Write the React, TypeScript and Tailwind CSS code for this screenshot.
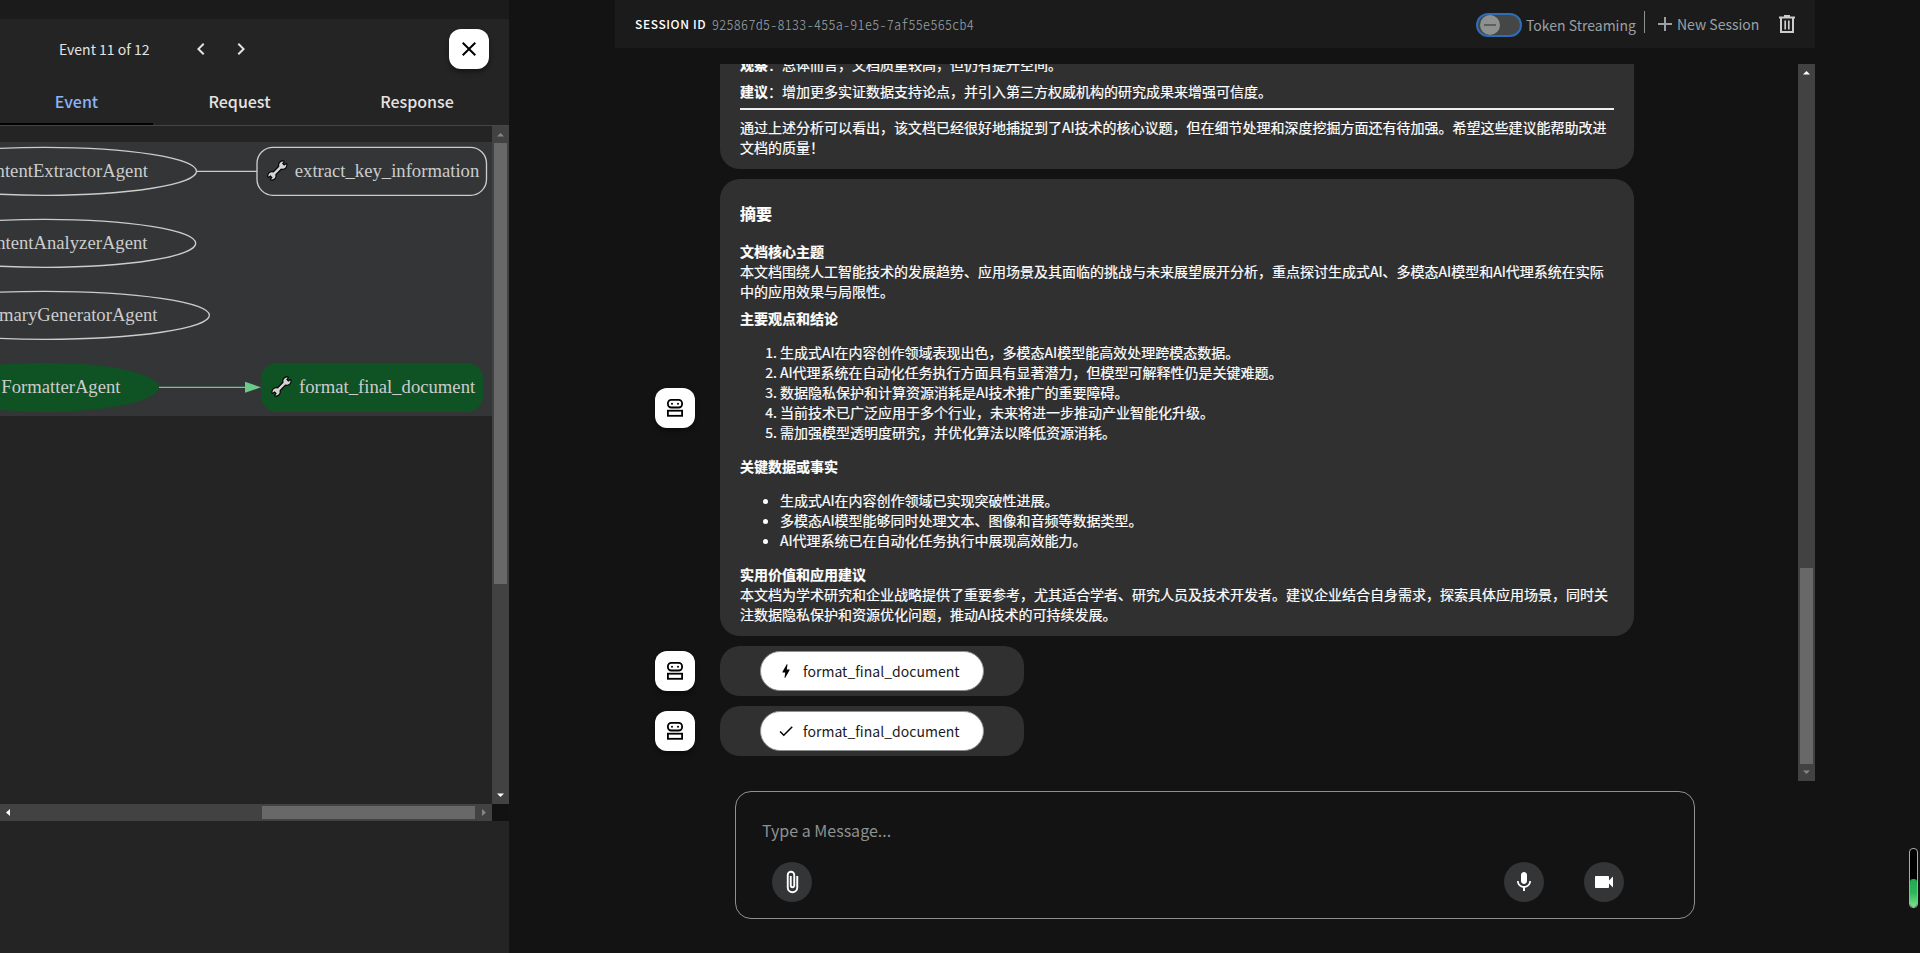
import React from "react";
import {
  MdAdd,
  MdBolt,
  MdCheck,
  MdChevronLeft,
  MdChevronRight,
  MdClose,
  MdMic,
  MdVideocam,
} from "react-icons/md";

function RobotIcon() {
  return (
    <svg width="20" height="20" viewBox="0 0 20 20" fill="none" stroke="#000" strokeWidth="1.8">
      <rect x="2.9" y="1.9" width="14.2" height="7.6" rx="3.4" />
      <rect x="2.9" y="12.7" width="14.2" height="5.1" />
      <circle cx="7" cy="5.700" r="1" fill="#000" stroke="none" />
      <circle cx="13" cy="5.700" r="1" fill="#000" stroke="none" />
    </svg>
  );
}

function Avatar() {
  return (
    <div className="flex size-10 shrink-0 items-center justify-center rounded-[12px] bg-white shadow-[0_3px_5px_rgba(0,0,0,0.4)]">
      <RobotIcon />
    </div>
  );
}

type Dir = "up" | "down" | "left" | "right";
const ARROWS: Record<Dir, string> = {
  up: "M5 10.5L8.5 7L12 10.5z",
  down: "M5 6.5L8.5 10L12 6.5z",
  left: "M10 5L6 8.5L10 12z",
  right: "M7 5L11 8.5L7 12z",
};

function ScrollArrow({ dir, muted }: { dir: Dir; muted?: boolean }) {
  return (
    <svg width="17" height="17" viewBox="0 0 17 17" className="shrink-0">
      <path d={ARROWS[dir]} fill={muted ? "#868686" : "#fff"} />
    </svg>
  );
}

function Wrench({ x, y }: { x: number; y: number }) {
  const jaws =
    "M16.300 1.100A3.600 3.600 0 1 0 18.900 3.700L16.800 5.300L14.700 3.200zM3.700 18.900A3.600 3.600 0 1 0 1.100 16.300L3.200 14.700L5.300 16.800z";
  return (
    <g transform={`translate(${x} ${y})`} strokeLinejoin="round" strokeLinecap="round">
      <path d={jaws} fill="#000" stroke="#000" strokeWidth="2.2" />
      <path d="M5.200 14.800L14.800 5.200" stroke="#000" strokeWidth="4.800" />
      <path d={jaws} fill="#d4d4d4" />
      <path d="M5.200 14.800L14.800 5.200" stroke="#d4d4d4" strokeWidth="2.600" />
    </g>
  );
}

function AgentGraph() {
  return (
    <svg
      width="492"
      height="274"
      viewBox="0 142 492 274"
      className="block bg-[#333537] font-['Liberation_Serif',serif] text-[18.67px]"
    >
      <g fill="none" stroke="#ccc" strokeWidth="1.33">
        <ellipse cx="45" cy="171.300" rx="151.500" ry="24" />
        <ellipse cx="45" cy="243.300" rx="150.700" ry="24" />
        <ellipse cx="45" cy="315.300" rx="164.400" ry="24" />
        <path d="M197 171.300H257" />
        <rect x="257" y="147.300" width="229.500" height="48" rx="16" />
      </g>
      <ellipse cx="45" cy="387.300" rx="114" ry="24.600" fill="#0f5223" />
      <rect x="261" y="362.700" width="222" height="49.300" rx="16" fill="#0f5223" />
      <path d="M159 387.300H246" stroke="#69cb87" strokeWidth="1.33" />
      <path d="M245 381.800L261 387.300L245 392.800z" fill="#69cb87" />
      <g fill="#ccc">
        <text x="147.900" y="176.700" textAnchor="end">ContentExtractorAgent</text>
        <text x="147.500" y="248.700" textAnchor="end">ContentAnalyzerAgent</text>
        <text x="157.500" y="320.700" textAnchor="end">SummaryGeneratorAgent</text>
        <text x="120.500" y="392.700" textAnchor="end">FormatterAgent</text>
        <text x="294.800" y="176.700">extract_key_information</text>
        <text x="299" y="392.700">format_final_document</text>
      </g>
      <Wrench x={267.3} y={160.5} />
      <Wrench x={271.5} y={376.5} />
    </svg>
  );
}

function EventPanel() {
  return (
    <aside className="flex w-[509px] shrink-0 flex-col bg-[#242424]">
      <div className="h-[19px] shrink-0 bg-[#1b1b1b]" />
      <div className="flex h-[60px] shrink-0 items-center pr-5 pl-[59px]">
        <span className="mt-px w-[130px] text-[14px] text-[#e3e3e3]">Event 11 of 12</span>
        <MdChevronLeft className="size-6 text-[#e3e3e3]" />
        <MdChevronRight className="ml-4 size-6 text-[#e3e3e3]" />
        <button className="ml-auto flex size-10 items-center justify-center rounded-[12px] bg-white shadow-[0_3px_5px_rgba(0,0,0,0.4)]">
          <MdClose className="size-6 text-black" />
        </button>
      </div>
      <nav className="flex h-[47px] shrink-0 border-b border-[#444746] text-[16px] font-medium text-[#e3e3e3]">
        <div className="flex w-[153px] items-center justify-center border-b-2 border-black text-[#8ab4f8]">Event</div>
        <div className="flex w-[173px] items-center justify-center pb-0.5">Request</div>
        <div className="flex w-[182px] items-center justify-center pb-0.5">Response</div>
      </nav>
      <div className="flex h-[678px] shrink-0">
        <div className="w-[492px] pt-4">
          <AgentGraph />
        </div>
        <div className="flex w-[17px] flex-col items-center bg-[#424242]">
          <ScrollArrow dir="up" muted />
          <div className="h-[441px] w-[13px] bg-[#686868]" />
          <div className="mt-auto flex">
            <ScrollArrow dir="down" />
          </div>
        </div>
      </div>
      <div className="flex h-[17px] shrink-0">
        <div className="flex w-[492px] items-center bg-[#424242]">
          <ScrollArrow dir="left" />
          <div className="ml-auto h-[13px] w-[213px] bg-[#686868]" />
          <ScrollArrow dir="right" muted />
        </div>
        <div className="w-[17px] bg-[#121212]" />
      </div>
    </aside>
  );
}

function TrashIcon() {
  return (
    <svg width="16" height="19" viewBox="0 0 16 19" fill="none" stroke="#ccc" strokeWidth="2">
      <path d="M0 2.500H16" />
      <path d="M5 1H11" />
      <path d="M2 3V17H14V3" />
      <path d="M6.200 5.500V14.500M9.800 5.500V14.500" strokeWidth="1.700" />
    </svg>
  );
}

function PaperclipIcon() {
  return (
    <svg width="24" height="24" viewBox="0 0 24 24" fill="none" stroke="#fff" strokeWidth="1.9">
      <path d="M17.250 6V17.500A4.750 4.750 0 0 1 7.750 17.500V5A3.250 3.250 0 0 1 14.250 5V15.500A1.750 1.750 0 0 1 10.750 15.500V6" />
    </svg>
  );
}

function SessionBar() {
  return (
    <header className="flex h-12 shrink-0 items-center bg-[#1b1b1b] pr-5 pl-5 text-[#9aa0a6]">
      <span className="w-[77px] text-[12px] font-medium tracking-[0.6px] whitespace-nowrap text-white">SESSION ID</span>
      <span className="text-[14px] font-light tracking-[0.28px] [font-feature-settings:'hwid']">
        925867d5-8133-455a-91e5-7af55e565cb4
      </span>
      <div className="ml-auto flex items-center">
        <div className="mt-0.5 flex h-6 w-[46px] items-center rounded-full border-2 border-[#2f6cba] bg-[#444746] pl-0.5">
          <div className="flex size-5 items-center justify-center rounded-full bg-[#8e918f]">
            <div className="h-0.5 w-3 bg-[#5c5f5e]" />
          </div>
        </div>
        <span className="mt-[3px] ml-1 w-[110px] text-[14px] whitespace-nowrap">Token Streaming</span>
        <div className="mb-1 ml-[8px] h-[22px] w-px bg-[#8e918f]" />
        <MdAdd className="ml-2 size-6" />
        <span className="w-[83px] text-[14px] whitespace-nowrap">New Session</span>
        <div className="ml-[19px]">
          <TrashIcon />
        </div>
      </div>
    </header>
  );
}

function ToolChip({ icon }: { icon: React.ReactNode }) {
  return (
    <div className="mt-[10px] flex items-center pl-10">
      <Avatar />
      <div className="ml-[25px] flex h-[50px] w-[304px] items-center rounded-[20px] bg-[#303030] pl-10">
        <div className="flex h-10 w-[224px] items-center rounded-full border border-[#8e918f] bg-white pl-4 text-[14px] text-[#1b1b1b]">
          <span className="flex w-[26px]">{icon}</span>
          <span className="tracking-[0.03px]">format_final_document</span>
        </div>
      </div>
    </div>
  );
}

function Conversation() {
  return (
    <div className="flex h-full w-[1183px] flex-col justify-end overflow-hidden pb-[25px] text-[14px] leading-5 text-white">
      <div className="ml-[105px] w-[914px] shrink-0 rounded-[20px] bg-[#303030] px-5 pt-5 pb-3 [-webkit-text-stroke:0.2px_#fff]">
        <p>
          <strong>观察</strong>：总体而言，文档质量较高，但仍有提升空间。
        </p>
        <p className="mt-[7px]">
          <strong>建议</strong>：增加更多实证数据支持论点，并引入第三方权威机构的研究成果来增强可信度。
        </p>
        <hr className="mt-[7px] mb-[7px] border-0 border-t-2 border-[#eee]" />
        <p>
          通过上述分析可以看出，该文档已经很好地捕捉到了AI技术的核心议题，但在细节处理和深度挖掘方面还有待加强。希望这些建议能帮助改进文档的质量！
        </p>
      </div>
      <div className="mt-[10px] flex shrink-0 items-center pl-10">
        <Avatar />
        <div className="ml-[25px] h-[457px] w-[914px] rounded-[20px] bg-[#303030] px-5 pt-6 [-webkit-text-stroke:0.2px_#fff]">
          <h2 className="text-[16px] font-bold">摘要</h2>
          <h3 className="mt-[18px] font-bold">文档核心主题</h3>
          <p>
            本文档围绕人工智能技术的发展趋势、应用场景及其面临的挑战与未来展望展开分析，重点探讨生成式AI、多模态AI模型和AI代理系统在实际中的应用效果与局限性。
          </p>
          <h3 className="mt-[7px] font-bold">主要观点和结论</h3>
          <ol className="mt-[14px] list-decimal pl-10">
            <li>生成式AI在内容创作领域表现出色，多模态AI模型能高效处理跨模态数据。</li>
            <li>AI代理系统在自动化任务执行方面具有显著潜力，但模型可解释性仍是关键难题。</li>
            <li>数据隐私保护和计算资源消耗是AI技术推广的重要障碍。</li>
            <li>当前技术已广泛应用于多个行业，未来将进一步推动产业智能化升级。</li>
            <li>需加强模型透明度研究，并优化算法以降低资源消耗。</li>
          </ol>
          <h3 className="mt-[14px] font-bold">关键数据或事实</h3>
          <ul className="mt-[14px] list-disc pl-10">
            <li>生成式AI在内容创作领域已实现突破性进展。</li>
            <li>多模态AI模型能够同时处理文本、图像和音频等数据类型。</li>
            <li>AI代理系统已在自动化任务执行中展现高效能力。</li>
          </ul>
          <h3 className="mt-[14px] font-bold">实用价值和应用建议</h3>
          <p>
            本文档为学术研究和企业战略提供了重要参考，尤其适合学者、研究人员及技术开发者。建议企业结合自身需求，探索具体应用场景，同时关注数据隐私保护和资源优化问题，推动AI技术的可持续发展。
          </p>
        </div>
      </div>
      <ToolChip icon={<MdBolt className="size-[18px] text-black" />} />
      <ToolChip icon={<MdCheck className="size-[18px] text-black" />} />
    </div>
  );
}

function RoundButton({ children }: { children: React.ReactNode }) {
  return (
    <button className="flex size-10 items-center justify-center rounded-full bg-[#333537] text-white">{children}</button>
  );
}

function Composer() {
  return (
    <div className="mt-[10px] ml-[120px] h-[128px] w-[960px] shrink-0 rounded-[16px] border border-[#8e918f] px-[26px] pt-[26px]">
      <div className="h-6 text-[16px] leading-6 text-[#8e918f]">Type a Message...</div>
      <div className="mt-5 flex pl-[10px]">
        <RoundButton>
          <PaperclipIcon />
        </RoundButton>
        <div className="ml-auto flex gap-10 pr-11">
          <RoundButton>
            <MdMic className="size-6" />
          </RoundButton>
          <RoundButton>
            <MdVideocam className="size-6" />
          </RoundButton>
        </div>
      </div>
    </div>
  );
}

export default function App() {
  return (
    <div className="relative flex h-[953px] w-[1920px] overflow-hidden bg-[#131313] font-['Noto_Sans_CJK_SC',sans-serif]">
      <EventPanel />
      <main className="ml-[106px] flex w-[1200px] flex-col">
        <SessionBar />
        <div className="mt-4 flex h-[717px] shrink-0">
          <Conversation />
          <div className="flex w-[17px] flex-col items-center bg-[#424242]">
            <ScrollArrow dir="up" />
            <div className="mt-auto h-[196px] w-[13px] bg-[#686868]" />
            <ScrollArrow dir="down" muted />
          </div>
        </div>
        <Composer />
      </main>
      <div className="absolute top-[848px] left-[1909px] flex h-[60px] w-[9px] flex-col justify-end overflow-hidden rounded-[4px] border border-[#aaa] bg-black">
        <div className="h-7 rounded-[3px] bg-linear-to-b from-[#1fa850] via-[#2fb65a] to-[#7be68c]" />
      </div>
    </div>
  );
}
